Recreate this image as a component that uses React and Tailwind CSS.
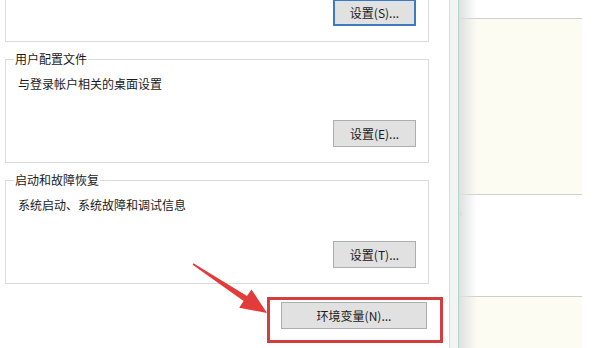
import React from "react";

const font = { fontFamily: '"Noto Sans CJK SC", "Microsoft YaHei", sans-serif' };

function Btn({ children, focused, className = "" }) {
  return (
    <div
      className={`flex h-[27px] items-center justify-center bg-[#e1e1e1] text-[12px] leading-[16px] text-[#1a1a1a] ${
        focused ? "border-2 border-[#3b7bbf]" : "border border-[#adadad]"
      } ${className}`}
    >
      {children}
    </div>
  );
}

function Group({ title, text, button, focused }) {
  return (
    <div className="relative flex h-[104px] flex-col border border-[#dadada]">
      {title ? (
        <div className="absolute left-[8px] top-[-9px] bg-white px-[1px] text-[12px] leading-[16px] text-[#1a1a1a]">
          {title}
        </div>
      ) : null}
      <div className="h-[32px] pl-[12px] pt-[16px] text-[12px] leading-[16px] text-[#1a1a1a]">{text}</div>
      <Btn focused={focused} className="mr-[12px] mt-[28px] w-[83px] self-end">
        {button}
      </Btn>
    </div>
  );
}

export default function App() {
  return (
    <div className="relative flex h-[348px] w-[607px] overflow-hidden bg-white" style={font}>
      {/* left dialog area */}
      <div className="w-[449px] shrink-0">
        <div className="ml-[5px] mt-[-62px] flex w-[424px] flex-col gap-[17px]">
          <Group title="" text="" button="设置(S)..." focused />
          <Group title="用户配置文件" text="与登录帐户相关的桌面设置" button="设置(E)..." />
          <Group title="启动和故障恢复" text="系统启动、系统故障和调试信息" button="设置(T)..." />
        </div>
        <div className="ml-[267px] mt-[13px] w-[176px] border-[3px] border-[#d33f40] pb-[11px] pl-[11px] pr-[13px] pt-[2px]">
          <Btn className="w-[146px]">环境变量(N)...</Btn>
        </div>
      </div>
      {/* separators */}
      <div className="w-px shrink-0 bg-[#ead8d8]" />
      <div className="w-[8px] shrink-0 bg-[#f3f5f5]" />
      <div className="w-px shrink-0 bg-[#b3d6cb]" />
      {/* right panel */}
      <div className="relative flex w-[123px] shrink-0 flex-col">
        <div className="h-[18px] bg-white" />
        <div className="h-[177px] border-y border-[#cfcfcf] bg-[#fcfcf3]" />
        <div className="relative h-[101px] bg-white">
          <span className="absolute left-[0px] top-[14px] text-[9px] leading-[10px] text-[#222]">›</span>
        </div>
        <div className="flex-1 border-t border-[#cfcfcf] bg-[#fcfcf3]" />
        <div className="pointer-events-none absolute inset-y-0 left-0 w-[18px] bg-gradient-to-r from-[#dfe1e0] to-transparent" />
      </div>
      <div className="flex-1 bg-white" />
      {/* annotation arrow */}
      <svg className="pointer-events-none absolute left-0 top-0" width="607" height="348" viewBox="0 0 607 348">
        <polygon
          points="193.4,263.3 247,296.1 251.4,289.4 267,313 239.2,307.8 243.6,301.1 192.6,264.7"
          fill="#e33a3a"
        />
      </svg>
    </div>
  );
}
